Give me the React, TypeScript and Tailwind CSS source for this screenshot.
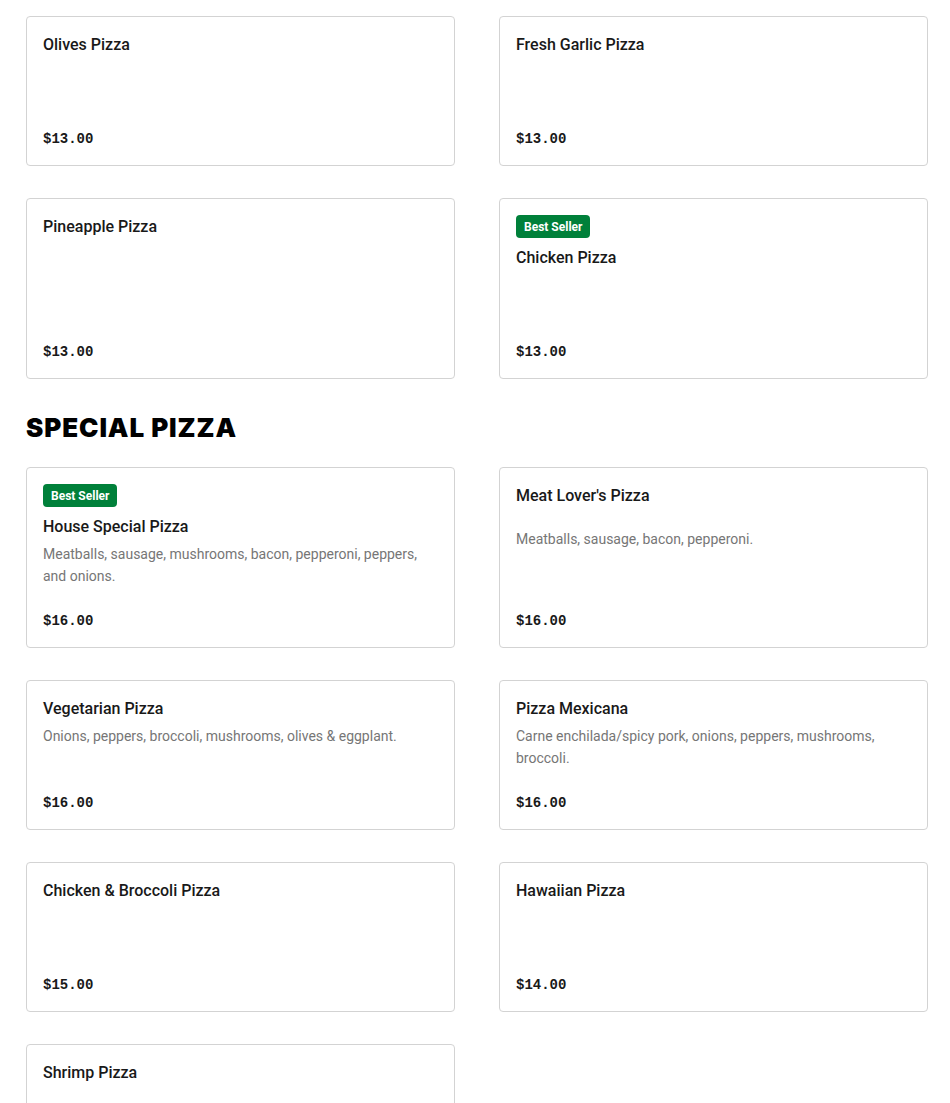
import React from 'react';

interface Item {
  name: string;
  price: string;
  description?: string;
  bestSeller?: boolean;
  descOffset?: boolean;
}

const topItems: Item[] = [
  { name: 'Olives Pizza', price: '$13.00' },
  { name: 'Fresh Garlic Pizza', price: '$13.00' },
  { name: 'Pineapple Pizza', price: '$13.00' },
  { name: 'Chicken Pizza', price: '$13.00', bestSeller: true },
];

const specialItems: Item[] = [
  {
    name: 'House Special Pizza',
    price: '$16.00',
    bestSeller: true,
    description: 'Meatballs, sausage, mushrooms, bacon, pepperoni, peppers, and onions.',
  },
  {
    name: "Meat Lover's Pizza",
    price: '$16.00',
    description: 'Meatballs, sausage, bacon, pepperoni.',
    descOffset: true,
  },
  {
    name: 'Vegetarian Pizza',
    price: '$16.00',
    description: 'Onions, peppers, broccoli, mushrooms, olives & eggplant.',
  },
  {
    name: 'Pizza Mexicana',
    price: '$16.00',
    description: 'Carne enchilada/spicy pork, onions, peppers, mushrooms, broccoli.',
  },
  { name: 'Chicken & Broccoli Pizza', price: '$15.00' },
  { name: 'Hawaiian Pizza', price: '$14.00' },
  { name: 'Shrimp Pizza', price: '$15.00' },
];

const MenuCard: React.FC<{ item: Item }> = ({ item }) => (
  <div className="flex flex-col rounded-[4px] border border-[#d3d3d3] bg-white p-4">
    {item.bestSeller && (
      <div className="mb-2 flex">
        <span className="flex h-[23px] items-center rounded-[4px] bg-[#00803a] px-2 text-[12px] font-bold text-white">
          Best Seller
        </span>
      </div>
    )}
    <h3 className="text-[16px] leading-6 font-medium text-[#191919]">{item.name}</h3>
    <p
      className={`min-h-[44px] text-[14px] leading-[22px] text-[#767676] ${
        item.descOffset ? 'mt-[20px]' : 'mt-1'
      }`}
    >
      {item.description}
    </p>
    <div className="mt-auto pt-6 font-['Liberation_Mono',monospace] text-[14px] leading-5 font-bold text-[#191919]">
      {item.price}
    </div>
  </div>
);

export default function App() {
  return (
    <div className="min-h-screen bg-white pt-4 pl-[26px] font-['Roboto','Noto_Sans',sans-serif]">
      <div className="grid grid-cols-[429px_429px] gap-x-[44px] gap-y-8">
        {topItems.map((item, i) => (
          <MenuCard key={i} item={item} />
        ))}
      </div>
      <h2 className="mt-[33px] mb-[23px] font-['Inter',sans-serif] text-[26px] leading-8 font-black tracking-[0.035em] text-black">
        SPECIAL PIZZA
      </h2>
      <div className="grid grid-cols-[429px_429px] gap-x-[44px] gap-y-8 pb-8">
        {specialItems.map((item, i) => (
          <MenuCard key={i} item={item} />
        ))}
      </div>
    </div>
  );
}
